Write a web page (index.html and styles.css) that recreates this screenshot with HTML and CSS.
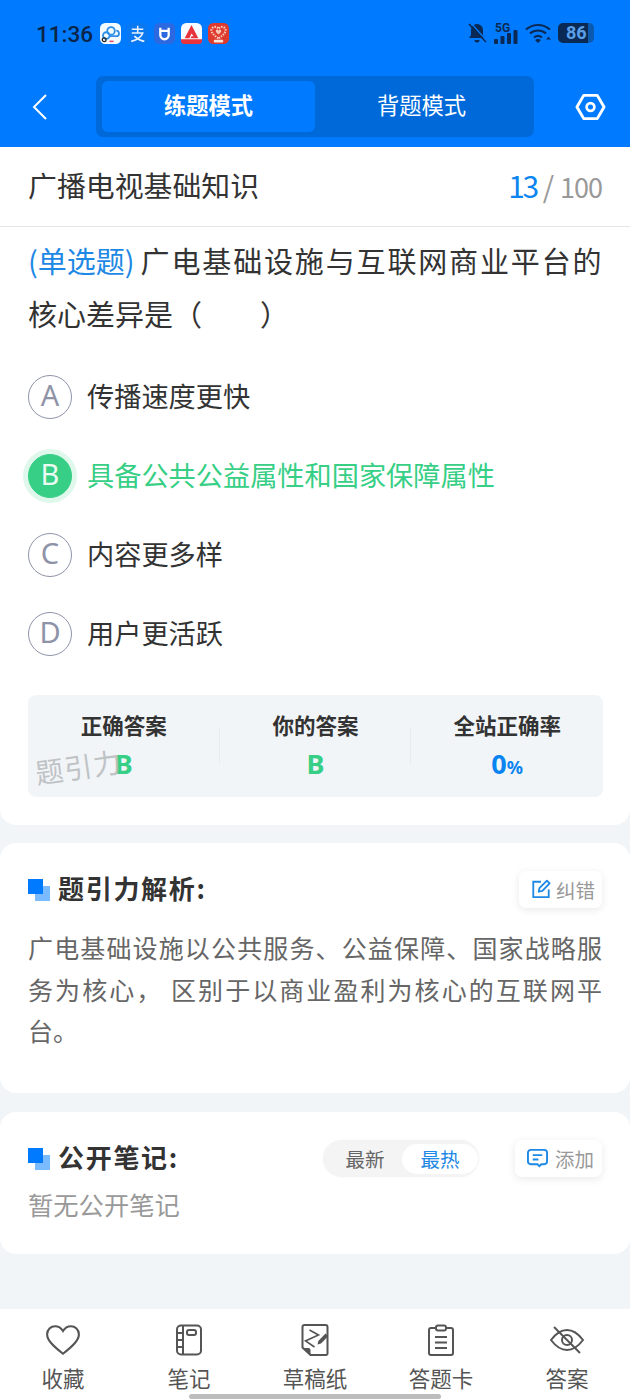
FILE: index.html
```html
<!DOCTYPE html>
<html lang="zh">
<head>
<meta charset="utf-8">
<title>练题模式</title>
<link rel="stylesheet" href="styles.css">
</head>
<body>
<div class="phone">
  <header class="head">
    <div class="status">
      <span class="time">11:36</span>
      <div class="apps">
        <svg class="app" viewBox="0 0 20 20"><rect width="20" height="20" rx="5" fill="#f4fbff"/><circle cx="10.500" cy="7.500" r="3.600" fill="none" stroke="#2f8fe8" stroke-width="1.700"/><circle cx="6" cy="12" r="3.200" fill="none" stroke="#2f8fe8" stroke-width="1.700"/><path d="M9 12.500h6.500a2.600 2.600 0 0 0 0-5.200" fill="none" stroke="#2f8fe8" stroke-width="1.700"/><path d="M9 17.500h4" stroke="#e2506a" stroke-width="1.500"/><circle cx="4" cy="16" r="1.800" fill="none" stroke="#222" stroke-width="1.200"/></svg>
        <svg class="app" viewBox="0 0 20 20"><rect width="20" height="20" rx="5" fill="#0a78f0"/><path d="M4.500 6h11M10.200 2.500V9M4.500 9.500h10.500c-1.200 3.500-5 6.500-11 8M7 12.500c2.500 2.500 5.500 4.200 9.500 5" fill="none" stroke="#e8f2ff" stroke-width="1.500"/></svg>
        <svg class="app" viewBox="0 0 20 20"><rect width="20" height="20" rx="5" fill="#2c68e0"/><path d="M6 4.500v7a4 4 0 0 0 8 0v-7M5.500 7.500h9" fill="none" stroke="#fff" stroke-width="2.200"/></svg>
        <svg class="app" viewBox="0 0 20 20"><rect width="20" height="20" rx="5" fill="#f6fbff"/><path d="M10 2 3.500 14.500H8l2-4.500 2 2.500h-2l-.8 2H16.500z" fill="#e8333c"/><path d="M0 15.500h20V15 17a3 3 0 0 1-3 3H3a3 3 0 0 1-3-3z" fill="#e8333c"/></svg>
        <svg class="app" viewBox="0 0 20 20"><rect width="20" height="20" rx="5" fill="#de3a2e"/><path d="M10 14.500C5 11.500 2.800 8.500 3.300 6.300 4.300 3 8.500 3 10 5.500 11.500 3 15.700 3 16.700 6.300 17.200 8.500 15 11.500 10 14.500z" fill="none" stroke="#f8c9b8" stroke-width="2" stroke-dasharray="1.500 1"/><path d="M10 11C8 9.500 7 8 7.500 7s2-1 2.500 .5C10.500 6 12 6 12.500 7s-.5 2.500-2.500 4z" fill="#f8c9b8"/><rect x="5.500" y="16" width="9" height="2.500" rx="1" fill="#fde4d8"/></svg>
      </div>
      <div class="sys">
        <svg class="bell" viewBox="0 0 20 22"><path d="M10 2a6 6 0 0 0-6 6v5l-2 3h16l-2-3V8a6 6 0 0 0-6-6zM7.500 18a2.500 2.500 0 0 0 5 0z" fill="#0a2a55"/><path d="M2 2l17 18" stroke="#0a2a55" stroke-width="1.800"/><path d="M4 1l16 18" stroke="#007bff" stroke-width="1.200"/></svg>
        <span class="sig"><span class="five">5G</span><svg class="bars" viewBox="0 0 24 14"><rect x="0" y="9" width="4" height="5" rx="1"/><rect x="6.500" y="6" width="4" height="8" rx="1"/><rect x="13" y="3" width="4" height="11" rx="1"/><rect x="19.500" y="0" width="4" height="14" rx="1"/></svg></span>
        <svg class="wifi" viewBox="0 0 26 20"><path d="M1 6.500c7-6 17-6 24 0M5 10.500c4.500-4 11.500-4 16 0M9 14.500c2.500-2 5.500-2 8 0" fill="none" stroke="#0a2a55" stroke-width="2.200"/><path d="M13 20l-3-3c1.500-1.200 4.500-1.200 6 0zM21 16.500l5 0-2.500-3z" fill="#0a2a55"/></svg>
        <span class="batt"><span class="batt-n">86</span></span>
      </div>
    </div>
    <div class="nav">
      <svg class="back" viewBox="0 0 16 28"><path d="M14 2 2 14l12 12" fill="none" stroke="#fff" stroke-width="2"/></svg>
      <div class="seg">
        <span class="seg-item on">练题模式</span>
        <span class="seg-item">背题模式</span>
      </div>
      <svg class="gear" viewBox="0 0 32 28"><path d="M9 2h14l7 12-7 12H9L2 14z" fill="none" stroke="#fff" stroke-width="3" stroke-linejoin="round"/><circle cx="16" cy="14" r="4" fill="none" stroke="#fff" stroke-width="2.800"/></svg>
    </div>
  </header>

  <section class="card-q">
    <div class="title-row">
      <span class="title">广播电视基础知识</span>
      <span class="count"><b class="cur">13</b><i class="sl">/</i><span class="total">100</span></span>
    </div>
    <div class="q">
      <div class="q-line first"><span class="qtype">(单选题)</span><span>广电基础设施与互联网商业平台的</span></div>
      <div class="q-line">核心差异是（　　）</div>
    </div>
    <ul class="opts">
      <li class="opt"><span class="dot">A</span><span>传播速度更快</span></li>
      <li class="opt right"><span class="dot">B</span><span>具备公共公益属性和国家保障属性</span></li>
      <li class="opt"><span class="dot">C</span><span>内容更多样</span></li>
      <li class="opt"><span class="dot">D</span><span>用户更活跃</span></li>
    </ul>
    <div class="stats">
      <div class="stat"><span class="s-l">正确答案</span><span class="s-v green">B</span><span class="mark">题引力</span></div>
      <div class="stat sep"><span class="s-l">你的答案</span><span class="s-v green">B</span></div>
      <div class="stat sep"><span class="s-l">全站正确率</span><span class="s-v blue">0<small>%</small></span></div>
    </div>
  </section>

  <section class="card analysis">
    <div class="c-head">
      <h2 class="c-title"><i class="sq"></i>题引力解析:</h2>
      <span class="chip"><svg class="ic" viewBox="0 0 22 22"><path d="M11 3H2.500v17h17v-8.500" fill="none" stroke="#1e88e5" stroke-width="2"/><path d="M8.500 14l.8-4L17.500 1.800l3 3L12.500 13z" fill="none" stroke="#1e88e5" stroke-width="2" stroke-linejoin="round"/></svg>纠错</span>
    </div>
    <p class="body">广电基础设施以公共服务、公益保障、国家战略服务为核心， 区别于以商业盈利为核心的互联网平台。</p>
  </section>

  <section class="card notes">
    <div class="c-head">
      <h2 class="c-title"><i class="sq"></i>公开笔记:</h2>
      <div class="n-tools">
        <div class="toggle"><span class="t-i">最新</span><span class="t-i on">最热</span></div>
        <span class="chip"><svg class="ic" viewBox="0 0 22 20"><path d="M4 1.500h14a3 3 0 0 1 3 3v9a3 3 0 0 1-3 3h-3l-2 2-2-2H4a3 3 0 0 1-3-3v-9a3 3 0 0 1 3-3z" fill="none" stroke="#1e88e5" stroke-width="2"/><path d="M6 7h10M6 11.500h6" stroke="#1e88e5" stroke-width="2"/></svg>添加</span>
      </div>
    </div>
    <p class="empty">暂无公开笔记</p>
  </section>

  <nav class="tabs">
    <div class="tab"><svg class="t-ic" viewBox="0 0 34 30"><path d="M17 28C7 20 2 15 2 9.500 2 5 5.500 2 9.500 2c3 0 5.800 1.700 7.500 4.500C18.700 3.700 21.500 2 24.500 2 28.500 2 32 5 32 9.500 32 15 27 20 17 28z" fill="none" stroke="#555" stroke-width="2"/></svg>收藏</div>
    <div class="tab"><svg class="t-ic" viewBox="0 0 28 32"><rect x="2" y="1.500" width="24" height="29" rx="4" fill="none" stroke="#555" stroke-width="2"/><path d="M8 2v28M2 9h6M2 16h6M2 23h6" stroke="#555" stroke-width="2"/><rect x="12" y="6" width="9" height="5" rx="2" fill="none" stroke="#555" stroke-width="2"/></svg>笔记</div>
    <div class="tab"><svg class="t-ic" viewBox="-4.500 0 36 32"><path d="M3 1h21a2 2 0 0 1 2 2v26.500a1.500 1.500 0 0 1-1.500 1.500H9l-8-7.500V3a2 2 0 0 1 2-2z" fill="none" stroke="#555" stroke-width="2"/><path d="M1.500 24H7a2 2 0 0 1 2 2v5z" fill="#555"/><path d="M8 6l9 5-13 6 9 6" fill="none" stroke="#555" stroke-width="1.600"/><path d="M16 20.500l.8-3.500 7.200-7.500 2.700 2.700-7.200 7.300z" fill="#555"/></svg>草稿纸</div>
    <div class="tab"><svg class="t-ic" viewBox="0 0 28 32"><path d="M8 4H4a2 2 0 0 0-2 2v23a2 2 0 0 0 2 2h20a2 2 0 0 0 2-2V6a2 2 0 0 0-2-2h-4" fill="none" stroke="#555" stroke-width="2"/><rect x="9" y="1.500" width="10" height="5" rx="2" fill="none" stroke="#555" stroke-width="2"/><path d="M8 13h12M8 18.500h12M8 24h12" stroke="#555" stroke-width="2"/></svg>答题卡</div>
    <div class="tab"><svg class="t-ic" viewBox="0 0 36 30"><path d="M2 15C8 7 13 5 18 5s10 2 16 10c-6 8-11 10-16 10S8 23 2 15z" fill="none" stroke="#555" stroke-width="2"/><circle cx="18" cy="15" r="5" fill="none" stroke="#555" stroke-width="2"/><path d="M5 2l26 26" stroke="#555" stroke-width="2"/></svg>答案</div>
    <i class="home"></i>
  </nav>
</div>
</body>
</html>
```
FILE: styles.css
```css
* { box-sizing: border-box; }
html, body { margin: 0; padding: 0; }
body { font-family: "Noto Sans CJK SC", "Noto Sans", sans-serif; background: #f2f5f8; color: #333; text-spacing-trim: space-all; }
.phone { width: 630px; height: 1400px; position: relative; overflow: hidden; background: #f2f5f8; display: flex; flex-direction: column; }

.head { background: #007bff; height: 147px; flex: none; }
.status { height: 66px; display: flex; align-items: center; padding: 0 36px 0 36px; }
.time { font-family: Roboto, sans-serif; font-size: 22.500px; font-weight: 500; color: #0b2447; width: 64px; position: relative; top: 1px; }
.apps { display: flex; gap: 6px; }
.app { width: 21px; height: 21px; display: block; }
.sys { margin-left: auto; display: flex; align-items: center; gap: 7px; }
.bell { width: 20px; height: 22px; }
.sig { position: relative; width: 24px; height: 22px; display: block; }
.five { position: absolute; left: 1px; top: -1px; font: 700 12px/14px Roboto, sans-serif; color: #0a2a55; }
.bars { position: absolute; left: 0; bottom: 0; width: 24px; height: 14px; fill: #0a2a55; }
.wifi { width: 26px; height: 20px; }
.batt { width: 36px; height: 20px; background: linear-gradient(90deg, #0a2a55 0 83%, #0a5ab0 83% 100%); border-radius: 5px; color: #5a9fe8; display: flex; align-items: center; padding-left: 8px; font: 700 18px/20px Roboto, sans-serif; }
.batt-n { display: block; }

.nav { height: 61px; margin-top: 10px; display: flex; align-items: center; padding: 0 24px 0 32px; }
.back { width: 16px; height: 28px; display: block; }
.seg { margin-left: 48px; width: 438px; height: 61px; background: #0069da; border-radius: 7px; padding: 5px 6px; display: flex; }
.seg-item { flex: 1; display: flex; align-items: center; justify-content: center; font-size: 22.300px; color: #fff; border-radius: 6px; padding-bottom: 6px; }
.seg-item.on { background: #007bff; font-weight: 700; }
.gear { width: 31px; height: 28px; margin-left: auto; display: block; }

.card-q { background: #fff; height: 678px; border-radius: 0 0 16px 16px; flex: none; }
.title-row { height: 80px; border-bottom: 1px solid #e3e5e8; display: flex; align-items: center; justify-content: space-between; padding: 0 28px 0 28px; }
.title { font-size: 28.900px; color: #333; position: relative; top: -3px; }
.count { font-size: 27px; color: #999; display: flex; align-items: baseline; position: relative; top: -2px; }
.cur { font-weight: 400; font-size: 30px; letter-spacing: -2.500px; color: #0a84f0; }
.sl { font-style: normal; margin: 0 6px 0 6px; font-size: 29px; }
.total { letter-spacing: -1px; }
.q { margin: 7px 26px 0 28px; font-size: 29px; line-height: 53px; color: #333; }
.q-line { display: block; white-space: nowrap; }
.first { letter-spacing: 1.850px; }
.qtype { color: #1e88e5; letter-spacing: 0; margin-right: 6px; }
.opts { list-style: none; margin: 15px 0 0; padding: 0 0 0 28px; }
.opt { height: 79px; display: flex; align-items: center; font-size: 27.200px; color: #333; }
.dot { width: 44px; height: 44px; margin-top: 4px; border: 1px solid #8f93a8; border-radius: 50%; color: #8f93a8; font-family: "Noto Sans", sans-serif; font-size: 29px; line-height: 38px; text-align: center; margin-right: 15px; flex: none; }
.right { color: #36cf85; }
.right .dot { background: #36cf85; border-color: #36cf85; color: #e9fbf2; box-shadow: 0 0 0 5px #e0f8ec; }
.stats { margin: 24px 27px 0 28px; height: 102px; background: #f2f5f8; border-radius: 8px; display: flex; }
.stat { flex: 1; position: relative; display: flex; flex-direction: column; align-items: center; padding-top: 16px; }
.sep::before { content: ""; position: absolute; left: -1px; top: 33px; height: 36px; border-left: 1px solid #e8ebef; }
.s-l { font-size: 21.500px; font-weight: 700; line-height: 28px; color: #333; }
.s-v { font-family: "Noto Sans", sans-serif; font-weight: 700; font-size: 27px; line-height: 36px; margin-top: 7px; }
.s-v small { font-size: 18px; }
.green { color: #36cf85; }
.blue { color: #0a84f0; }
.mark { position: absolute; left: 7px; top: 53px; font-size: 28px; line-height: 36px; letter-spacing: 1px; font-weight: 400; color: #b4b7ba; opacity: .8; transform: rotate(-8deg); }

.card { background: #fff; border-radius: 16px; flex: none; padding: 0 28px 0 28px; }
.analysis { margin-top: 18px; height: 250px; padding-top: 27px; }
.notes { margin-top: 19px; height: 142px; padding-top: 27px; }
.c-head { display: flex; align-items: center; justify-content: space-between; height: 38px; }
.c-title { margin: 0; padding-bottom: 4px; font-size: 26px; font-weight: 700; color: #333; display: flex; align-items: center; letter-spacing: 1.700px; isolation: isolate; }
.sq { width: 15px; height: 15px; background: #007bff; margin-right: 15px; position: relative; display: block; top: -1px; }
.sq::after { content: ""; position: absolute; left: 7px; top: 7px; width: 15px; height: 15px; background: #7abaff; z-index: -1; }
.chip { height: 37px; width: 83px; padding: 0 0 0 12px; background: #fff; border-radius: 7px; box-shadow: 0 2px 8px rgba(0,0,0,.09); display: flex; align-items: center; font-size: 19.500px; color: #999; }
.n-tools .chip { width: 87px; }
.ic { width: 20px; height: 20px; margin-right: 5px; flex: none; }
.n-tools .ic { width: 21px; margin-right: 7px; }
.body { margin: 19px 0 0; font-size: 25px; line-height: 41.500px; text-align: justify; color: #666; }
.n-tools { display: flex; align-items: center; gap: 36px; }
.toggle { width: 156px; height: 37px; background: #f4f4f5; border-radius: 19px; padding: 4px 1px 3px 5px; display: flex; box-shadow: 0 0 3px rgba(0,0,0,.04); }
.t-i { width: 74px; display: flex; align-items: center; justify-content: center; font-size: 19.500px; color: #666; border-radius: 16px; }
.t-i.on { width: 76px; background: #fff; color: #1e88e5; }
.empty { margin: 9px 0 0; font-size: 25.300px; line-height: 36px; color: #999; }

.tabs { position: absolute; left: 0; right: 0; bottom: 0; height: 91px; background: #fff; display: flex; justify-content: space-between; }
.tab { width: 126px; display: flex; flex-direction: column; align-items: center; font-size: 21.500px; line-height: 30px; color: #555; padding-top: 15px; }
.t-ic { height: 32px; width: 36px; margin-bottom: 7px; display: block; }
.home { position: absolute; left: 189px; top: 85px; width: 252px; height: 5px; border-radius: 3px; background: #bdbdbd; }
```
